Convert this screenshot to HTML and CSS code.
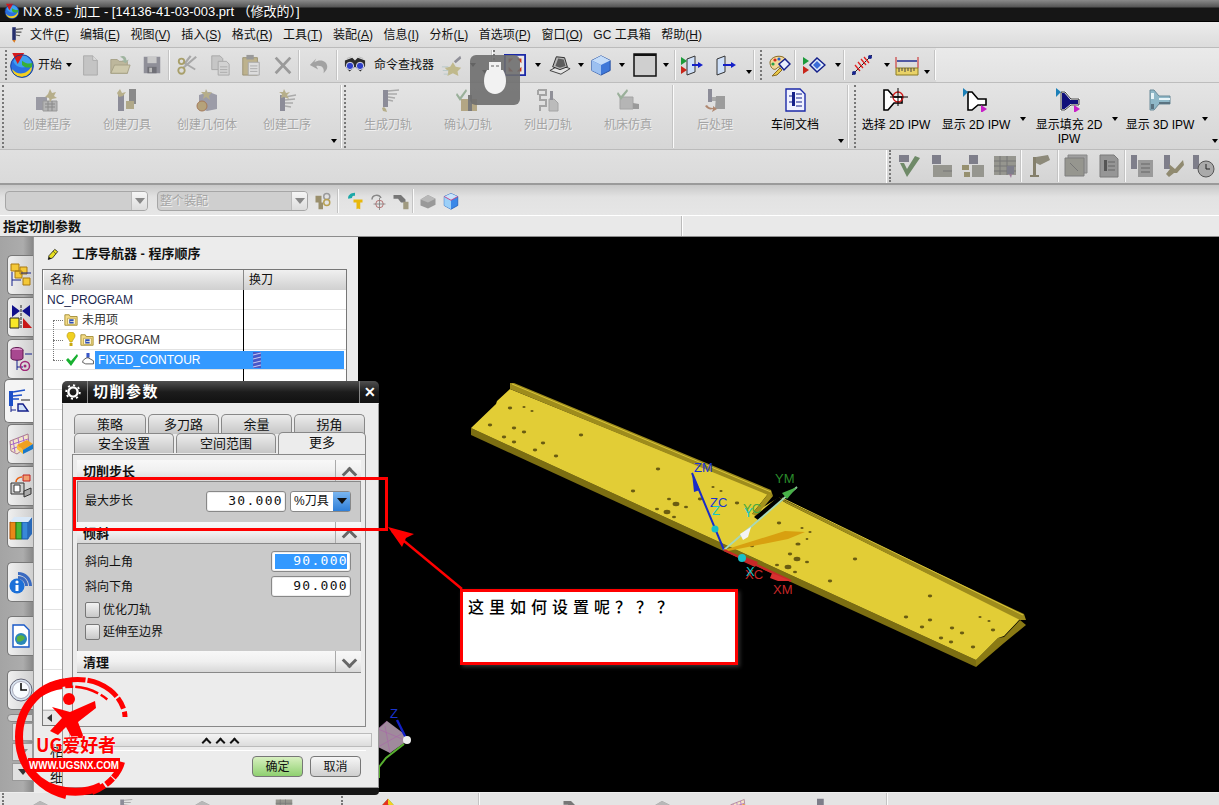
FILE: index.html
```html
<!DOCTYPE html>
<html lang="zh">
<head>
<meta charset="utf-8">
<title>NX 8.5</title>
<link rel="stylesheet" href="styles.css">
</head>
<body>
<svg class="defs" aria-hidden="true">
  <symbol id="i-nx" viewBox="0 0 24 24"><circle cx="12" cy="13" r="10.5" fill="#2a6fe0"/><path d="M3 16c5 6 14 5 18-3 1 5-4 10-9 10S3 20 3 16z" fill="#f4d020"/><path d="M4 9c3 6 10 7 17 2-1-5-5-8-9-8-4 0-7 3-8 6z" fill="#3fa0f0"/><path d="M12 8c4 3 7 3 10 2l-1 4c-4 1-7 0-9-2z" fill="#38b038"/><path d="M3 1h11L8 11z" fill="#d81818"/><circle cx="12" cy="13" r="10.5" fill="none" stroke="#143a90" stroke-width=".8"/></symbol>
  <symbol id="i-menu" viewBox="0 0 24 24"><path d="M6 1h5v18H6z" fill="#26306e"/><path d="M11 4l10-1M11 8l8 0M11 12l6 1" stroke="#555" stroke-width="1.6"/><path d="M6 19l3 4 2-4z" fill="#d87a20"/></symbol>
  <symbol id="i-rain" viewBox="0 0 24 24"><path d="M12 1l11 12-11 10L1 13z" fill="#38b838"/><path d="M12 1L1 13l6 5 5-9z" fill="#e83020"/><path d="M12 1l11 12-6 1-5-6z" fill="#f4d020"/><path d="M9 11h6v6H9z" fill="#fff" stroke="#4030a0"/></symbol>
  <symbol id="i-doc" viewBox="0 0 24 24"><path d="M5 2h10l5 5v16H5z" fill="#c4c4c4" stroke="#aaa"/><path d="M15 2v5h5" fill="#ddd" stroke="#aaa"/></symbol>
  <symbol id="i-folder" viewBox="0 0 24 24"><path d="M2 21V6h7l2 2h9v13z" fill="#bdb79c" stroke="#a5a085"/><path d="M2 21l4-9h17l-3 9z" fill="#cdc8ab" stroke="#a5a085"/><path d="M12 3c4-2 7 0 7 4l3-1-4 4-4-3h2c0-2-2-3-4-4z" fill="#9fb49f"/></symbol>
  <symbol id="i-save" viewBox="0 0 24 24"><path d="M3 3h18v18H3z" fill="#8f8f98"/><path d="M7 3h10v7H7z" fill="#c9c9c9"/><path d="M7 14h10v7H7z" fill="#6f6f76"/><path d="M9 15h3v5H9z" fill="#bbb"/></symbol>
  <symbol id="i-cut" viewBox="0 0 24 24"><path d="M22 3L8 15M16 2L9 11" stroke="#a8a8a8" stroke-width="2.5" fill="none"/><path d="M21 17L8 9" stroke="#a8a8a8" stroke-width="2" fill="none"/><circle cx="6" cy="18" r="3.5" fill="none" stroke="#a89f6a" stroke-width="2"/><circle cx="6" cy="8" r="3" fill="none" stroke="#a89f6a" stroke-width="2"/></symbol>
  <symbol id="i-copy" viewBox="0 0 24 24"><path d="M3 2h9l3 3v12H3z" fill="#c6c6c6" stroke="#a6a6a6"/><path d="M10 8h9l3 3v12H10z" fill="#d2d2d2" stroke="#a6a6a6"/><path d="M12 14h8M12 17h8M12 20h8" stroke="#aaa"/></symbol>
  <symbol id="i-paste" viewBox="0 0 24 24"><path d="M3 4h16v19H3z" fill="#bdb28d" stroke="#9a9273"/><path d="M7 1h8v5H7z" fill="#999"/><path d="M9 9h12v14H9z" fill="#ddd" stroke="#a6a6a6"/><path d="M11 13h8M11 16h8M11 19h8" stroke="#aaa"/></symbol>
  <symbol id="i-x" viewBox="0 0 24 24"><path d="M4 4l16 17M20 4L4 21" stroke="#9a9a9a" stroke-width="3" fill="none"/></symbol>
  <symbol id="i-undo" viewBox="0 0 24 24"><path d="M7 9c6-4 14-2 14 5 0 3-2 5-4 7 1-5-1-9-8-8l2 4-9-5 7-7z" fill="#a2a2a2"/></symbol>
  <symbol id="i-binoc" viewBox="0 0 24 24"><path d="M1 7l8-3 3 3 3-3 8 3v6l-5 6-6-5-6 5-5-6z" fill="#2c2c2c"/><path d="M3 5l5-2M16 3l5 2" stroke="#bbb"/><circle cx="6.5" cy="13" r="4" fill="#2f40c8" stroke="#eee"/><circle cx="17.5" cy="13" r="4" fill="#2f40c8" stroke="#eee"/></symbol>
  <symbol id="i-star" viewBox="0 0 24 24"><path d="M13 9l3 5 6 1-4 4 1 5-6-3-6 3 1-5-4-4 6-1z" fill="#c0b98c"/><path d="M14 8l7-6 1 3-6 5z" fill="#8f8f98"/><path d="M1 14h7M2 18h6M3 22h5" stroke="#b8c8c8"/></symbol>
  <symbol id="i-fit" viewBox="0 0 24 24"><path d="M1 1h22v22H1z" fill="#e8e8e8" stroke="#1c2aa8" stroke-width="2"/><path d="M5 5h5L5 10zM19 5h-5l5 5zM5 19h5l-5-5zM19 19h-5l5-5z" fill="#c6391c"/></symbol>
  <symbol id="i-shade" viewBox="0 0 24 24"><path d="M1 18l11-6 11 4-10 6z" fill="#e4e4e4" stroke="#333"/><path d="M4 14L8 3l9 1 3 10-8 3z" fill="#b4b4b4" stroke="#222"/><path d="M7 13l3-8 6 1 2 7-6 2z" fill="#5c5c5c"/></symbol>
  <symbol id="i-cube" viewBox="0 0 24 24"><path d="M2 7l10-5 10 5v11l-10 5-10-5z" fill="#3f78d8" stroke="#1f4aa0"/><path d="M2 7l10 5 10-5-10-5z" fill="#c4dcf8"/><path d="M2 7l10 5v11L2 18z" fill="#9cc0f0"/></symbol>
  <symbol id="i-win" viewBox="0 0 24 24"><path d="M1 1h22v22H1z" fill="#cfcfcf" stroke="#111" stroke-width="1.5"/><path d="M1 1h22v2H1z" fill="#111"/></symbol>
  <symbol id="i-flow1" viewBox="0 0 24 24"><path d="M7 6l8-3v16l-8 3z" fill="#cfe0f8" stroke="#333"/><path d="M1 4v8l6-4z" fill="#1c9a3a"/><path d="M1 13v8l6-4z" fill="#c8261a"/><path d="M12 12h9" stroke="#1420c8" stroke-width="2"/><path d="M23 12l-5-3v6z" fill="#1420c8"/></symbol>
  <symbol id="i-flow2" viewBox="0 0 24 24"><path d="M3 6l8-3v16l-8 3z" fill="#cfe0f8" stroke="#333"/><path d="M9 12h10" stroke="#1420c8" stroke-width="2"/><path d="M22 12l-5-3v6z" fill="#1420c8"/></symbol>
  <symbol id="i-palette" viewBox="0 0 24 24"><path d="M3 9c1-5 8-7 13-5 4 2 4 6 2 8-3 3-6 1-8 3-2 3-7 1-7-6z" fill="#f2d79a" stroke="#8a6a22"/><circle cx="8" cy="7" r="1.6" fill="#d8261a"/><circle cx="12" cy="6" r="1.6" fill="#2a60c8"/><circle cx="6" cy="11" r="1.6" fill="#28a048"/><path d="M12 11l6-5 5 5-6 6z" fill="#e8eefc" stroke="#14208a" stroke-width="1.5"/><path d="M5 23l8-8 2 2-5 5z" fill="#e8c84a" stroke="#8a6a22"/></symbol>
  <symbol id="i-flow3" viewBox="0 0 24 24"><path d="M1 4v8l6-4z" fill="#1c9a3a"/><path d="M1 13v8l6-4z" fill="#c8261a"/><path d="M8 12l7-7 8 7-8 7z" fill="#e0ecfc" stroke="#14208a" stroke-width="1.5"/><path d="M11 12l4-4 4 4-4 4z" fill="#3b6cd8"/></symbol>
  <symbol id="i-hatch" viewBox="0 0 24 24"><path d="M2 22L22 2" stroke="#222"/><circle cx="4" cy="20" r="2" fill="#14208a"/><circle cx="20" cy="4" r="2" fill="#14208a"/><path d="M5 12l5 6M8 9l5 6M11 6l5 6M14 4l5 6" stroke="#e02020" stroke-width="1.3"/></symbol>
  <symbol id="i-ruler" viewBox="0 0 24 24"><path d="M1 4v11M23 4v11" stroke="#c82020"/><path d="M2 8h20" stroke="#14208a" stroke-width="1.4"/><path d="M1 15h22v7H1z" fill="#e9d267" stroke="#8a7a22"/><path d="M4 15v4M7 15v3M10 15v4M13 15v3M16 15v4M19 15v3" stroke="#444"/></symbol>
  <symbol id="i-cprog" viewBox="0 0 24 24"><path d="M1 9h11v13H1z" fill="#9a9aa4"/><path d="M8 13h14v10H8z" fill="#b4b4b4" stroke="#999"/><path d="M10 16h10M10 19h10M13 13v10M17 13v10" stroke="#8a8a8a"/><path d="M15 1l2 4 4-1-2 4 3 2-5 1-2 3-1-4-4-1 3-3z" fill="#b6ae8a"/></symbol>
  <symbol id="i-ctool" viewBox="0 0 24 24"><path d="M3 6h6v17H3z" fill="#8c8c98"/><path d="M14 1h7v15h-7z" fill="#8a8a8a"/><path d="M11 13h8v8h-8z" fill="#b0a888"/><path d="M5 1l2 4 4-1-3 4-4 1-2-4z" fill="#b6ae8a"/></symbol>
  <symbol id="i-cgeom" viewBox="0 0 24 24"><path d="M4 7l10-3 8 3v14l-10 2-8-3z" fill="#9c9ca8"/><circle cx="7" cy="18" r="5" fill="#b5a27a" stroke="#a57a5a"/><path d="M11 1l2 4 4-1-3 4 1 4-4-3-3 2 1-4-3-3h4z" fill="#b6ae8a"/></symbol>
  <symbol id="i-coper" viewBox="0 0 24 24"><path d="M5 7h5v16H5z" fill="#8c8c98"/><path d="M10 9l11-2M10 12l10-1M10 15l8 0M10 18l6 1" stroke="#aaa" stroke-width="1.4"/><path d="M9 1l2 4 4-1-3 3 2 4-5-2-3 1 1-4-3-2h4z" fill="#b6ae8a"/></symbol>
  <symbol id="i-gen" viewBox="0 0 24 24"><path d="M7 2h5v17H7z" fill="#8c8c98"/><path d="M12 3l11-1M12 6l9 0M12 9l7 1M12 12l5 1" stroke="#aaa" stroke-width="1.4"/><path d="M8 19l2 2 1 3-4-1-1-3z" fill="#b6ae8a"/></symbol>
  <symbol id="i-verify" viewBox="0 0 24 24"><path d="M5 11h16v12H5z" fill="#b3a684"/><path d="M12 7h4v16h-4z" fill="#7a7a7a"/><path d="M1 5l3 4 6-8 1 2-7 10-4-6z" fill="#9ab09a"/></symbol>
  <symbol id="i-list" viewBox="0 0 24 24"><path d="M2 2h8v5H4v5h6v6H4v5M2 2v5" fill="none" stroke="#a4a4a4" stroke-width="2"/><path d="M13 11h5l4 4v8h-9z" fill="#bbb" stroke="#a4a4a4"/><path d="M14 3h3v9h-3z" fill="#909098"/></symbol>
  <symbol id="i-sim" viewBox="0 0 24 24"><path d="M4 9h13v12H4z" fill="#b5b5b5" stroke="#a4a4a4"/><path d="M17 15l6 1v5h-6z" fill="#9a9a9a"/><path d="M2 4l3 4 6-7 1 2-7 9-4-6z" fill="#9ab09a"/></symbol>
  <symbol id="i-post" viewBox="0 0 24 24"><path d="M5 1h4v13H5z" fill="#8c8c98"/><path d="M9 9h5v4H9z" fill="#aaa"/><path d="M13 8h9v13H12z" fill="#9c9c9c"/><path d="M2 18c2 3 5 4 8 3l-1 3 5-3-4-3v2c-3 0-5-1-6-3z" fill="#b08870"/></symbol>
  <symbol id="i-shop" viewBox="0 0 24 24"><path d="M3 1h14l5 5v17H3z" fill="#f0f2ff" stroke="#1c2aa8" stroke-width="1.4"/><path d="M9 4h3v14H9z" fill="#14208a"/><path d="M13 6h6M13 10h6M13 14h6M13 18h6M6 8h3M6 14h3" stroke="#14208a"/></symbol>
  <symbol id="i-sel2d" viewBox="0 0 28 24"><path d="M2 2h4l6 7h8v6h-8l-6 7H2z" fill="#fff" stroke="#000" stroke-width="1.6"/><circle cx="16" cy="9" r="5" fill="none" stroke="#d01818" stroke-width="1.3"/><path d="M16 0v18M8 9h18" stroke="#000"/></symbol>
  <symbol id="i-show2d" viewBox="0 0 28 24"><path d="M6 4h4l6 7h8v6h-8l-6 5H6z" fill="#fff" stroke="#000" stroke-width="1.6"/><path d="M1 0l5 4-5 5z" fill="#1c80b8"/><path d="M19 17l6 4-6 4z" fill="#c820c8"/></symbol>
  <symbol id="i-fill2d" viewBox="0 0 28 24"><path d="M6 4h4l6 7h8v6h-8l-6 5H6z" fill="#10107a" stroke="#fff" stroke-width="2"/><path d="M6 4h4l6 7h8v6h-8l-6 5H6z" fill="none" stroke="#000" stroke-width=".8"/><path d="M1 0l5 4-5 5z" fill="#1c80b8"/><path d="M19 17l6 4-6 4z" fill="#c820c8"/></symbol>
  <symbol id="i-show3d" viewBox="0 0 28 24"><path d="M4 2h4l5 6h11v8H13l-5 6H4z" fill="#8fb8c8" stroke="#6a8a98"/><path d="M13 10h11v2H13zM5 5h3v6H5z" fill="#e8f4f8"/><path d="M5 16h3v5H5zM13 14h11v2H13z" fill="#5a7280"/></symbol>
  <symbol id="i-r1" viewBox="0 0 24 24"><path d="M2 1h10v7H2z" fill="#7e7e8a"/><path d="M3 9l7 14 13-19-5-2-8 13-3-6z" fill="#6f8a68"/></symbol>
  <symbol id="i-r2" viewBox="0 0 24 24"><path d="M3 1h9v9H3z" fill="#7e7e8a"/><path d="M4 11h19v12H4z" fill="#96968f"/><path d="M14 17h9" stroke="#777"/></symbol>
  <symbol id="i-r3" viewBox="0 0 24 24"><path d="M8 1h9v9H8z" fill="#7e7e8a"/><path d="M11 11h12v12H11z" fill="#96968f"/><path d="M1 11h7v5H1zM3 18h6v5H3z" fill="#96906f"/></symbol>
  <symbol id="i-r4" viewBox="0 0 24 24"><path d="M1 2h22v19H1z" fill="#96968f"/><path d="M1 7h22M1 12h22M1 17h22M7 2v19M14 2v19" stroke="#777"/><path d="M14 12h7v8h-7z" fill="#7e7e8a"/><path d="M16 20h3l-1 4z" fill="#9a7a98"/></symbol>
  <symbol id="i-r5" viewBox="0 0 24 24"><path d="M5 3h3v19H5zM2 21h9v2H2z" fill="#85806c"/><path d="M8 3l12-2 2 5-10 5-4-2z" fill="#8d8a7a"/></symbol>
  <symbol id="i-r6" viewBox="0 0 24 24"><path d="M4 1h19v18H4z" fill="#a0a0a0" stroke="#888"/><path d="M1 4h19v18H1z" fill="#96968f" stroke="#7f7f7f"/><path d="M6 9l8 8" stroke="#777"/></symbol>
  <symbol id="i-r7" viewBox="0 0 24 24"><path d="M3 1h14l4 4v18H3z" fill="#969696" stroke="#7a7a7a"/><path d="M7 6h3v11H7z" fill="#555"/><path d="M11 8h7M11 12h7M11 16h7" stroke="#666"/></symbol>
  <symbol id="i-r8" viewBox="0 0 24 24"><path d="M1 1h6v14H1z" fill="#7e7e8a"/><path d="M8 6h15v17H8z" fill="#9a9a9a"/><path d="M11 10h9M11 14h9M11 18h9" stroke="#666"/></symbol>
  <symbol id="i-r9" viewBox="0 0 24 24"><path d="M3 1h6v14H3z" fill="#7e7e8a"/><path d="M8 10l6 5 8-9 1 5-7 8-3 0-5 4-3-3 4-5z" fill="#908a70"/></symbol>
  <symbol id="i-r10" viewBox="0 0 24 24"><path d="M2 1h6v14H2z" fill="#7e7e8a"/><circle cx="15" cy="15" r="8" fill="#aaa" stroke="#555"/><path d="M15 10v5h4" stroke="#222" fill="none"/></symbol>
  <symbol id="i-asm" viewBox="0 0 24 24"><path d="M2 5h8v9H2zM6 14h6v9H6z" fill="#9a8f6c"/><circle cx="17" cy="6" r="4" fill="none" stroke="#9a9a9a" stroke-width="2"/><circle cx="17" cy="14" r="4" fill="none" stroke="#b8a050" stroke-width="2"/></symbol>
  <symbol id="i-s1" viewBox="0 0 24 24"><path d="M12 1c-6 0-10 4-9 8l5-1c0-3 2-3 4-3z" fill="#1ca8a8"/><path d="M10 10h12v4h-3v9l-3-1-2 1v-9h-4z" fill="#e8b80c"/></symbol>
  <symbol id="i-s2" viewBox="0 0 24 24"><path d="M4 10c0-6 9-8 12-2" fill="none" stroke="#888" stroke-width="2"/><circle cx="14" cy="16" r="5" fill="none" stroke="#a85050"/><path d="M14 8v16M6 16h16" stroke="#777"/></symbol>
  <symbol id="i-s3" viewBox="0 0 24 24"><path d="M2 4h10l6 6v4H12L8 9H2z" fill="#777"/><path d="M15 13h7v10h-7z" fill="#a09a80"/></symbol>
  <symbol id="i-s4" viewBox="0 0 24 24"><path d="M2 10l10-6 10 5v8l-10 5-10-4z" fill="#999"/><path d="M2 10l10 4 10-5-10-5z" fill="#b8b8b8"/></symbol>
  <symbol id="i-s5" viewBox="0 0 24 24"><path d="M3 6l9-4 9 4v12l-9 5-9-5z" fill="#3b88e8" stroke="#1c5ab8"/><path d="M3 6l9 5 9-5-9-4z" fill="#c8e4fc"/><path d="M3 6l9 5v12l-9-5z" fill="#9cd0f8"/><path d="M3 6l9 5 9-5" fill="none" stroke="#e02868"/></symbol>
  <symbol id="i-t1" viewBox="0 0 24 24"><path d="M2 1h8v7H2zM11 4h7v7h-7zM6 8h7v7H6z" fill="#f4c838" stroke="#a87810"/><path d="M3 9v14M3 17h9M3 23h0M12 10h10" stroke="#14208a" fill="none"/><path d="M14 15h7v7h-7z" fill="#f4c838" stroke="#a87810"/></symbol>
  <symbol id="i-t2" viewBox="0 0 24 24"><path d="M3 0l8 6-8 6zM21 0l-8 6 8 6z" fill="#10108a"/><path d="M12 0v24" stroke="#222" stroke-dasharray="3 1"/><path d="M1 13h9v10H1z" fill="#f8e828" stroke="#222"/><path d="M14 13l9 10h-9z" fill="#c81818"/></symbol>
  <symbol id="i-t3" viewBox="0 0 24 24"><ellipse cx="8" cy="3" rx="6" ry="2.5" fill="#d890c8" stroke="#601850"/><path d="M2 3v8c0 3 12 3 12 0V3" fill="#a84890" stroke="#601850"/><path d="M8 13v10M8 20h6M16 7h7" stroke="#14208a"/><circle cx="16" cy="19" r="4.5" fill="none" stroke="#a02878" stroke-width="1.5"/><circle cx="16" cy="19" r="1.5" fill="#a02878"/></symbol>
  <symbol id="i-t4" viewBox="0 0 24 24"><path d="M2 2h4v15H2z" fill="#1c50c8"/><path d="M6 3l12-2M6 7l9-1M6 10l6 0" stroke="#1c50c8" stroke-width="1.5"/><path d="M14 11h9" stroke="#222"/><path d="M4 17v6M4 21h5" stroke="#14208a"/><path d="M11 15v7h10l-5-7z" fill="#cfe0f8" stroke="#14208a" stroke-width="1.4"/></symbol>
  <symbol id="i-t5" viewBox="0 0 24 24"><path d="M1 9l18-7 1 11-12 9-6-3z" fill="#f5e6c8" stroke="#a87890"/><path d="M4 8l2 12M9 6l2 12M14 4l2 11M1 13l18-6M3 17l15-6" stroke="#a868c8" fill="none"/><path d="M8 13l10-5 6 4-10 6z" fill="#f0a020"/><path d="M8 13l6 5v4l-6-5z" fill="#f8c040"/><path d="M14 18l10-6v5l-10 5z" fill="#1878c8"/></symbol>
  <symbol id="i-t6" viewBox="0 0 24 24"><path d="M2 9h13v11H2z" fill="#d0d0d0" stroke="#333"/><path d="M5 11h6v7H5z" fill="#fff" stroke="#333"/><path d="M15 17l7-3v6l-7 3z" fill="#aaa" stroke="#333"/><path d="M7 8c0-3 3-5 6-5" stroke="#e86010" fill="none" stroke-width="1.6"/><path d="M14 1h7v6h-7z" fill="#f0a070" stroke="#c02020"/></symbol>
  <symbol id="i-t7" viewBox="0 0 24 24"><path d="M1 6h6v17H1z" fill="#e88818" stroke="#a85008"/><path d="M7 6h6v17H7z" fill="#48b838" stroke="#207810"/><path d="M13 6h6v17h-6z" fill="#3888d8" stroke="#1858a8"/><path d="M19 6l4-5v17l-4 5z" fill="#2868b8"/><path d="M1 6l4-5h18l-4 5z" fill="#d8e8f8"/></symbol>
  <symbol id="i-t8" viewBox="0 0 24 24"><circle cx="8" cy="16" r="7.5" fill="#1c70d8"/><circle cx="8" cy="12" r="1.6" fill="#fff"/><path d="M6.5 15h3v6h-3z" fill="#fff"/><path d="M9 5c6 0 11 5 11 11h3C23 8 17 2 9 2zM9 9c4 0 7 3 7 7h3c0-6-4-10-10-10z" fill="#3a6ac0"/></symbol>
  <symbol id="i-t9" viewBox="0 0 24 24"><path d="M4 1h11l5 5v17H4z" fill="#fff" stroke="#1858c8" stroke-width="1.4"/><circle cx="12" cy="15" r="6" fill="#2a88b8"/><path d="M8 13c3-3 7-2 8 1-2 3-6 5-8 3z" fill="#58b040"/></symbol>
  <symbol id="i-t10" viewBox="0 0 24 24"><circle cx="12" cy="12" r="11" fill="#d8e4f0" stroke="#667"/><circle cx="12" cy="12" r="8.5" fill="#f8fcff" stroke="#aab"/><path d="M12 5v7h6" stroke="#111" stroke-width="1.6" fill="none"/></symbol>
  <symbol id="i-pen" viewBox="0 0 24 24"><path d="M5 15L15 4l5 4-9 11-7 2z" fill="#e8e020" stroke="#222" stroke-width="1.4"/><path d="M12 7l5 5" stroke="#222"/><path d="M3 22l3-5 3 3z" fill="#111"/></symbol>
  <symbol id="i-fo" viewBox="0 0 16 16"><path d="M1 14V2h5l1 2h8v10z" fill="#f4dc88" stroke="#a08a30"/><path d="M4 6h9v7H4z" fill="#fff8d8" stroke="#c0a850"/><path d="M6 7h5v2H7v1h4v2H6z" fill="#3050b8"/></symbol>
  <symbol id="i-bulb" viewBox="0 0 10 16"><path d="M5 0c3 0 4 2 4 4 0 2-2 3-3 6H4C3 7 1 6 1 4c0-2 1-4 4-4z" fill="#f0d020" stroke="#b09010" stroke-width=".6"/><path d="M3.5 11h3v3h-3z" fill="#c8a810"/></symbol>
  <symbol id="i-check" viewBox="0 0 14 14"><path d="M1 7l2-2 3 3 6-7 1 2-7 10z" fill="#18b030"/></symbol>
  <symbol id="i-mill" viewBox="0 0 16 18"><path d="M6 0h4v6H6z" fill="#3858c8"/><path d="M1 12c0-3 4-6 7-6l7 4v4H5z" fill="#fff" stroke="#333"/></symbol>
  <symbol id="i-holder" viewBox="0 0 10 16"><path d="M1 0h8v16H1z" fill="#4858c8"/><path d="M1 3l8-2M1 7l8-2M1 11l8-2M1 15l8-2" stroke="#c8c8f0"/></symbol>
  <symbol id="i-gear" viewBox="0 0 16 16"><circle cx="8" cy="8" r="4.6" fill="none" stroke="#fff" stroke-width="2.4"/><circle cx="8" cy="8" r="6.8" fill="none" stroke="#fff" stroke-width="1.8" stroke-dasharray="2.2 3.1"/></symbol>
</svg>

<div class="app">
  <header class="title"><svg class="title-ico"><use href="#i-nx"/></svg><span>NX 8.5 - 加工 - [14136-41-03-003.prt （修改的）]</span></header>
  <nav class="menu">
    <svg class="menu-ico"><use href="#i-menu"/></svg>
    <span>文件(<u>F</u>)</span><span>编辑(<u>E</u>)</span><span>视图(<u>V</u>)</span><span>插入(<u>S</u>)</span><span>格式(<u>R</u>)</span><span>工具(<u>T</u>)</span><span>装配(<u>A</u>)</span><span>信息(<u>I</u>)</span><span>分析(<u>L</u>)</span><span>首选项(<u>P</u>)</span><span>窗口(<u>O</u>)</span><span>GC 工具箱</span><span>帮助(<u>H</u>)</span>
  </nav>

  <div class="bar">
    <i class="grip g8"></i>
    <b class="c w28"><svg class="ic26"><use href="#i-nx"/></svg></b>
    <b class="c w28 txt">开始</b><b class="c w10"><i class="drop"></i></b>
    <b class="c w32"><svg class="ic22"><use href="#i-doc"/></svg></b>
    <b class="c w28"><svg class="ic22"><use href="#i-folder"/></svg></b>
    <b class="c w35"><svg class="ic22"><use href="#i-save"/></svg></b><i class="sep"></i>
    <b class="c w34"><svg class="ic22"><use href="#i-cut"/></svg></b>
    <b class="c w32"><svg class="ic22"><use href="#i-copy"/></svg></b>
    <b class="c w30"><svg class="ic22"><use href="#i-paste"/></svg></b>
    <b class="c w33"><svg class="ic22"><use href="#i-x"/></svg></b><i class="sep"></i>
    <b class="c w37"><svg class="ic22"><use href="#i-undo"/></svg></b><i class="sep"></i>
    <b class="c w34"><svg class="ic22"><use href="#i-binoc"/></svg></b>
    <b class="c w64 txt">命令查找器</b>
    <b class="c w32"><svg class="ic22"><use href="#i-star"/></svg></b>
    <b class="c w10"><i class="drop"></i></b>
    <b class="c w14 low"><i class="drop"></i></b><i class="sep"></i>
    <i class="grip g10"></i>
    <b class="c w24"><svg class="ic22"><use href="#i-fit"/></svg></b>
    <b class="c w22"><i class="drop"></i></b>
    <b class="c w22"><svg class="ic22"><use href="#i-shade"/></svg></b>
    <b class="c w20"><i class="drop"></i></b>
    <b class="c w20"><svg class="ic22"><use href="#i-cube"/></svg></b>
    <b class="c w22"><i class="drop"></i></b>
    <b class="c w24"><svg class="ic24"><use href="#i-win"/></svg></b>
    <b class="c w18"><i class="drop"></i></b><i class="sep"></i>
    <b class="c w32"><svg class="ic24"><use href="#i-flow1"/></svg></b>
    <b class="c w36"><svg class="ic24"><use href="#i-flow2"/></svg></b>
    <b class="c w10 low"><i class="drop"></i></b><i class="sep"></i>
    <i class="grip g8"></i>
    <b class="c w32"><svg class="ic24"><use href="#i-palette"/></svg></b><i class="sep"></i>
    <b class="c w36"><svg class="ic24"><use href="#i-flow3"/></svg></b>
    <b class="c w12"><i class="drop"></i></b><i class="sep"></i>
    <b class="c w34"><svg class="ic24"><use href="#i-hatch"/></svg></b>
    <b class="c w16"><i class="drop"></i></b>
    <b class="c w24"><svg class="ic24"><use href="#i-ruler"/></svg></b>
    <b class="c w16 low"><i class="drop"></i></b><i class="sep"></i>
    <span class="bar-rest"></span>
  </div>

  <div class="ribbon">
    <i class="grip g7"></i>
    <div class="tool off"><svg class="ic24"><use href="#i-cprog"/></svg><span>创建程序</span></div>
    <div class="tool off"><svg class="ic24"><use href="#i-ctool"/></svg><span>创建刀具</span></div>
    <div class="tool off"><svg class="ic24"><use href="#i-cgeom"/></svg><span>创建几何体</span></div>
    <div class="tool off"><svg class="ic24"><use href="#i-coper"/></svg><span>创建工序</span></div>
    <b class="c w14 foot"><i class="drop"></i></b><i class="sep"></i>
    <i class="grip g5"></i>
    <div class="tool off"><svg class="ic24"><use href="#i-gen"/></svg><span>生成刀轨</span></div>
    <div class="tool off"><svg class="ic24"><use href="#i-verify"/></svg><span>确认刀轨</span></div>
    <div class="tool off"><svg class="ic24"><use href="#i-list"/></svg><span>列出刀轨</span></div>
    <div class="tool off"><svg class="ic24"><use href="#i-sim"/></svg><span>机床仿真</span></div>
    <i class="sep sep-pad"></i>
    <div class="tool off w82"><svg class="ic24"><use href="#i-post"/></svg><span>后处理</span></div>
    <div class="tool w78"><svg class="ic24"><use href="#i-shop"/></svg><span>车间文档</span></div>
    <b class="c w14 foot"><i class="drop"></i></b><i class="sep"></i>
    <i class="grip g8"></i>
    <div class="tool w78"><svg class="ic28"><use href="#i-sel2d"/></svg><span>选择 2D IPW</span></div>
    <div class="tool w82"><svg class="ic28"><use href="#i-show2d"/></svg><span>显示 2D IPW</span></div>
    <b class="c w12 head"><i class="drop"></i></b>
    <div class="tool w80"><svg class="ic28"><use href="#i-fill2d"/></svg><span>显示填充 2D IPW</span></div>
    <b class="c w12 head"><i class="drop"></i></b>
    <div class="tool w78"><svg class="ic28"><use href="#i-show3d"/></svg><span>显示 3D IPW</span></div>
    <b class="c w12 head"><i class="drop"></i></b>
    <b class="c w7 foot"><i class="drop"></i></b>
  </div>

  <div class="row3">
    <div class="rbar">
      <i class="grip g5"></i>
      <b class="c w32"><svg class="ic24"><use href="#i-r1"/></svg></b>
      <b class="c w32"><svg class="ic24"><use href="#i-r2"/></svg></b>
      <b class="c w32"><svg class="ic24"><use href="#i-r3"/></svg></b>
      <b class="c w32"><svg class="ic24"><use href="#i-r4"/></svg></b><i class="sep"></i>
      <b class="c w36"><svg class="ic24"><use href="#i-r5"/></svg></b><i class="sep"></i>
      <b class="c w33"><svg class="ic24"><use href="#i-r6"/></svg></b>
      <b class="c w33"><svg class="ic24"><use href="#i-r7"/></svg></b><i class="sep"></i>
      <b class="c w32"><svg class="ic24"><use href="#i-r8"/></svg></b>
      <b class="c w30"><svg class="ic24"><use href="#i-r9"/></svg></b>
      <b class="c w30"><svg class="ic24"><use href="#i-r10"/></svg></b>
    </div>
  </div>

  <div class="selbar">
    <div class="combo wa"><span></span><i class="combo-btn"><i class="tri"></i></i></div>
    <div class="combo wb"><span>整个装配</span><i class="combo-btn"><i class="tri"></i></i></div>
    <b class="c w30"><svg class="ic18"><use href="#i-asm"/></svg></b><i class="sep"></i>
    <b class="c w24 ml4"><svg class="ic18"><use href="#i-s1"/></svg></b>
    <b class="c w22"><svg class="ic18"><use href="#i-s2"/></svg></b>
    <b class="c w24"><svg class="ic18"><use href="#i-s3"/></svg></b><i class="sep"></i>
    <b class="c w24 ml2"><svg class="ic18"><use href="#i-s4"/></svg></b>
    <b class="c w22"><svg class="ic18"><use href="#i-s5"/></svg></b>
  </div>

  <div class="status"><strong>指定切削参数</strong><i class="status-sep"></i></div>

  <main class="main">
    <aside class="tabs">
      <div class="vt t1"><svg class="ic24"><use href="#i-t1"/></svg></div>
      <div class="vt t1"><svg class="ic24"><use href="#i-t2"/></svg></div>
      <div class="vt t1"><svg class="ic24"><use href="#i-t3"/></svg></div>
      <div class="vt act"><svg class="ic24"><use href="#i-t4"/></svg></div>
      <div class="vt t1"><svg class="ic24"><use href="#i-t5"/></svg></div>
      <div class="vt t1"><svg class="ic24"><use href="#i-t6"/></svg></div>
      <div class="vt t1"><svg class="ic24"><use href="#i-t7"/></svg></div>
      <div class="vt t1 gap12"><svg class="ic24"><use href="#i-t8"/></svg></div>
      <div class="vt t1 gap14"><svg class="ic24"><use href="#i-t9"/></svg></div>
      <div class="vt t1 gap14"><svg class="ic24"><use href="#i-t10"/></svg></div>
      <div class="handle"></div>
      <div class="sq gap14"></div>
      <div class="sq"><i class="tri"></i></div>
      <div class="sq"><i class="tri bar-tri"></i></div>
    </aside>
    <section class="nav">
      <div class="nav-head"><svg class="ic14"><use href="#i-pen"/></svg><strong>工序导航器 - 程序顺序</strong></div>
      <div class="table">
        <div class="thead"><span class="col1">名称</span><span class="col2">换刀</span></div>
        <div class="tbody">
          <div class="tr"><span class="name n0">NC_PROGRAM</span></div>
          <div class="tr"><i class="dots d1"></i><svg class="ic14"><use href="#i-fo"/></svg><span class="name n1">未用项</span></div>
          <div class="tr"><i class="dots d2"></i><svg class="bulb"><use href="#i-bulb"/></svg><svg class="ic14"><use href="#i-fo"/></svg><span class="name n1">PROGRAM</span></div>
          <div class="tr"><i class="dots d3"></i><svg class="chk"><use href="#i-check"/></svg><svg class="ic14"><use href="#i-mill"/></svg><span class="name sel">FIXED_CONTOUR<svg class="holder"><use href="#i-holder"/></svg></span></div>
        </div>
        <div class="tfoot"><i class="tri left"></i></div>
      </div>
      <div class="nav-foot"><strong>相关性</strong><strong>细节</strong></div>
    </section>
    <div class="view"></div>
  </main>
  <footer class="bottom">
    <i class="grip g7 grip-b"></i>
    <b class="c w66"><svg class="ic18"><use href="#i-s4"/></svg></b>
    <b class="c w102"><svg class="ic18"><use href="#i-gen"/></svg></b>
    <b class="c w54"><svg class="ic18"><use href="#i-s4"/></svg></b>
    <b class="c w110"><svg class="ic18"><use href="#i-r4"/></svg></b>
    <i class="grip g5 grip-b"></i>
    <b class="c w86"><svg class="ic18"><use href="#i-rain"/></svg></b>
    <b class="c w48"></b><i class="sep"></i>
    <b class="c w92 mla"><svg class="ic18"><use href="#i-s3"/></svg></b>
    <b class="c w90"><svg class="ic18"><use href="#i-s4"/></svg></b>
    <b class="c w64"><svg class="ic18"><use href="#i-t5"/></svg></b>
    <b class="c w98"><svg class="ic18"><use href="#i-r3"/></svg></b>
    <b class="c w18"></b><i class="sep"></i>
  </footer>
</div>

<svg class="scene" viewBox="0 0 1219 805">
  <path d="M471 428L976 660V667L471 435z" fill="#7c6e12"/>
  <path d="M976 660L998 638 1004 637 1020 620 1026 625 1004 643 976 667z" fill="#8a7a14"/>
  <path d="M471 428L496 404 497 401 510 389 768 494 752 514 778 498 786 503 1020 619 1004 636 998 638 976 660z" fill="#e2cd36"/>
  <path d="M510 383L514 383 771 490 773 496 768 495 510 389z" fill="#9e8c1c"/>
  <path d="M512 384L771 492" stroke="#d8c438" fill="none"/>
  <path d="M778 497L1024 614 1026 620 1020 620 786 503z" fill="#9e8c1c"/>
  <path d="M782 498L1023 615" stroke="#d8c438" fill="none"/>
  <path d="M768 494L773 496 756 516 752 514z" fill="#a5921c"/>
  <path d="M754 517L778 497 783 500 758 520z" fill="#000"/>
  <g class="holes">
    <ellipse cx="510" cy="408" rx="2.2" ry="1.4"/><ellipse cx="524" cy="407" rx="1.6" ry="1"/><ellipse cx="532" cy="411" rx="1.6" ry="1"/><ellipse cx="490" cy="425" rx="2.2" ry="1.4"/><ellipse cx="514" cy="428" rx="2.2" ry="1.4"/><ellipse cx="524" cy="432" rx="2.2" ry="1.4"/><ellipse cx="504" cy="437" rx="2.2" ry="1.4"/><ellipse cx="514" cy="442" rx="2.2" ry="1.4"/><ellipse cx="543" cy="443" rx="2.2" ry="1.4"/><ellipse cx="535" cy="450" rx="2.2" ry="1.4"/><ellipse cx="556" cy="456" rx="2.2" ry="1.4"/><ellipse cx="581" cy="435" rx="2.2" ry="1.4"/><ellipse cx="658" cy="469" rx="2.2" ry="1.4"/><ellipse cx="633" cy="491" rx="2.2" ry="1.4"/><ellipse cx="669" cy="499" rx="2" ry="1.2"/><ellipse cx="676" cy="504" rx="3.4" ry="2.2"/><ellipse cx="686" cy="507" rx="2" ry="1.2"/><ellipse cx="657" cy="509" rx="2" ry="1.2"/><ellipse cx="667" cy="512" rx="3.4" ry="2.2"/><ellipse cx="674" cy="517" rx="2" ry="1.2"/><ellipse cx="713" cy="487" rx="1.6" ry="1"/><ellipse cx="721" cy="491" rx="1.6" ry="1"/><ellipse cx="700" cy="499" rx="2.2" ry="1.4"/><ellipse cx="737" cy="503" rx="2.2" ry="1.4"/><ellipse cx="779" cy="523" rx="2.2" ry="1.4"/><ellipse cx="802" cy="528" rx="1.6" ry="1"/><ellipse cx="810" cy="532" rx="1.6" ry="1"/><ellipse cx="798" cy="544" rx="2.6" ry="1.6"/><ellipse cx="807" cy="539" rx="1.4" ry="1"/><ellipse cx="790" cy="554" rx="2.2" ry="1.4"/><ellipse cx="797" cy="559" rx="3.4" ry="2.2"/><ellipse cx="807" cy="562" rx="2" ry="1.2"/><ellipse cx="777" cy="565" rx="2" ry="1.2"/><ellipse cx="788" cy="567" rx="3.4" ry="2.2"/><ellipse cx="795" cy="572" rx="2" ry="1.2"/><ellipse cx="855" cy="559" rx="2.2" ry="1.4"/><ellipse cx="830" cy="581" rx="2.2" ry="1.4"/><ellipse cx="930" cy="596" rx="2.2" ry="1.4"/><ellipse cx="906" cy="617" rx="2.2" ry="1.4"/><ellipse cx="930" cy="620" rx="2.2" ry="1.4"/><ellipse cx="922" cy="627" rx="2.2" ry="1.4"/><ellipse cx="952" cy="628" rx="2.2" ry="1.4"/><ellipse cx="962" cy="633" rx="2.2" ry="1.4"/><ellipse cx="941" cy="638" rx="2.2" ry="1.4"/><ellipse cx="951" cy="642" rx="2.2" ry="1.4"/><ellipse cx="973" cy="647" rx="2.2" ry="1.4"/><ellipse cx="980" cy="617" rx="1.6" ry="1"/><ellipse cx="989" cy="621" rx="1.6" ry="1"/><ellipse cx="993" cy="630" rx="2.2" ry="1.4"/><ellipse cx="752" cy="546" rx="2" ry="1.2"/>
  </g>
  <path d="M724 550L692 473" stroke="#1a2cc8" stroke-width="2"/>
  <path d="M692 473L700 490 694 492z" fill="#1a2cc8"/>
  <path d="M724 550L797 487" stroke="#a8d8b8" stroke-width="1.8"/>
  <path d="M797 487L782 493 787 499z" fill="#48b048"/>
  <path d="M740 534L751 527 748 537 743 540z" fill="#f4f4f4"/>
  <path d="M724 550L785 531 805 532 788 539 728 551z" fill="#d8a010"/>
  <path d="M724 550L791 581" stroke="#c82828" stroke-width="2.4"/>
  <path d="M791 581L772 573 770 578 778 581z" fill="#d83030"/>
  <path d="M745 557L758 562 755 567 744 562z" fill="#c82828"/>
  <circle cx="715" cy="529" r="3.5" fill="#18c0c8"/>
  <circle cx="742" cy="558" r="4" fill="#18c0c8"/>
  <text class="ax blue" x="694" y="472">ZM</text>
  <text class="ax blue" x="710" y="507">ZC</text>
  <text class="ax cyan" x="712" y="515">Z</text>
  <text class="ax green" x="775" y="483">YM</text>
  <text class="ax green2" x="743" y="513">YC</text>
  <text class="ax cyan" x="744" y="517">Y</text>
  <text class="ax red" x="745" y="579">XC</text>
  <text class="ax cyan" x="746" y="576">X</text>
  <text class="ax red" x="773" y="594">XM</text>
  <path d="M387 721L403 733 407 741 390 753 378 747V729z" fill="#a08a9c"/>
  <path d="M387 721L378 729 407 741M378 747L403 733M390 753L385 726" stroke="#a868a8" fill="none" stroke-width=".7"/>
  <path d="M397 720L407 740" stroke="#1220c8" stroke-width="2.4"/>
  <path d="M404 744L386 758 379 767V778" stroke="#58b030" stroke-width="2" fill="none"/>
  <circle cx="407" cy="740" r="4" fill="#eee"/>
  <text class="ax blue" x="390" y="718">Z</text>
</svg>

<div class="mouse"><svg class="mouse-ic" viewBox="0 0 24 32"><path d="M6 0h12v8h2c2 3 3 7 3 11 0 8-5 13-11 13S1 27 1 19c0-4 1-8 3-11h2z" fill="#f2f2f2"/><path d="M8 3h3v2H8zM13 3h3v2h-3z" fill="#aaa"/></svg></div>

<section class="dlg">
  <div class="dlg-title"><svg class="ic16"><use href="#i-gear"/></svg><strong>切削参数</strong><span class="close">✕</span></div>
  <div class="dlg-body">
    <div class="dtabs">
      <span class="dtab w72">策略</span><span class="dtab w71">多刀路</span><span class="dtab w71">余量</span><span class="dtab w71">拐角</span>
    </div>
    <div class="dtabs r2">
      <span class="dtab w100">安全设置</span><span class="dtab w100">空间范围</span><span class="dtab active">更多</span>
    </div>
    <div class="panel">
      <div class="shead">切削步长<i class="chev up"></i></div>
      <div class="sbody s1">
        <span class="lab">最大步长</span>
        <span class="inp i80">30.000</span>
        <span class="sel2">%刀具<i class="sel2-btn"><i class="tri"></i></i></span>
      </div>
      <div class="shead">倾斜<i class="chev up"></i></div>
      <div class="sbody s2">
        <div class="frow"><span class="lab">斜向上角</span><span class="inp i80 hl">90.000</span></div>
        <div class="frow"><span class="lab">斜向下角</span><span class="inp i80">90.000</span></div>
        <label class="ck"><i class="box"></i>优化刀轨</label>
        <label class="ck"><i class="box"></i>延伸至边界</label>
      </div>
      <div class="shead">清理<i class="chev down"></i></div>
    </div>
    <div class="expander"><i></i><i></i><i></i></div>
    <div class="btns"><span class="btn ok">确定</span><span class="btn">取消</span></div>
  </div>
  <div class="dlg-foot"></div>
</section>

<div class="redbox"></div>
<svg class="scene anno" viewBox="0 0 1219 805">
  <path d="M462 589L392 531" stroke="#f00" stroke-width="2.4"/>
  <path d="M388 527L414 534 406 538 402 547z" fill="#f00"/>
</svg>
<div class="callout">这里如何设置呢？？？</div>

<svg class="logo" viewBox="0 0 125 135">
  <g fill="none" stroke="#f00">
    <path d="M62 12C32 12 9 36 9 67c0 28 18 50 46 54 14 2 26 0 36-5" stroke-width="8"/>
    <path d="M28 24C46 8 78 3 100 20c9 7 15 18 15 27" stroke-width="5" stroke-dasharray="30 1 20 2 34 2 12 3"/>
    <path d="M22 32C42 14 74 10 98 30" stroke-width="2.5" stroke-dasharray="8 2 24 3"/>
    <path d="M112 92c-3 12-14 24-30 30" stroke-width="6" stroke-dasharray="18 1 9 2"/>
    <path d="M14 90c8 20 24 32 42 36" stroke-width="6"/>
  </g>
  <circle cx="59" cy="29" r="6" fill="#f00"/>
  <path d="M42 37L60 42 85 31 86 38 68 52 74 68 62 68 56 57 48 65 40 61 52 48z" fill="#f00"/>
  <text class="lg1" x="26" y="82" textLength="80" lengthAdjust="spacingAndGlyphs">UG爱好者</text>
  <path d="M18 88h92v14H18z" fill="#f00"/>
  <text class="lg2" x="19" y="99" textLength="90" lengthAdjust="spacingAndGlyphs">WWW.UGSNX.COM</text>
</svg>
</body>
</html>
```
FILE: styles.css
```css
* { box-sizing: border-box; }
html, body { margin: 0; padding: 0; }
body {
  width: 1219px; height: 805px; overflow: hidden; position: relative; background: #000;
  font: 12px/14px "Liberation Sans", "Noto Sans CJK SC", sans-serif; color: #111;
}
i, b { font-style: normal; font-weight: normal; }
.defs { position: absolute; width: 0; height: 0; }
.app { display: flex; flex-direction: column; height: 805px; }

.title { height: 22px; display: flex; align-items: flex-end; padding: 0 0 1px 4px; gap: 3px; color: #fff; font-size: 13px;
  background: linear-gradient(#8a8a8a 0, #555 7px, #161616 8px, #161616 100%); border-bottom: 1px solid #000; }
.title span { line-height: 16px; }
.title-ico { width: 16px; height: 18px; }
.menu { height: 26px; display: flex; align-items: center; gap: 10.6px; padding-left: 30px; position: relative;
  background: linear-gradient(#ececec, #dcdcdc); border-bottom: 1px solid #bbb; }
.menu u { text-decoration: underline; }
.menu-ico { position: absolute; left: 8px; top: 4px; width: 17px; height: 18px; }

.c { display: flex; align-items: center; justify-content: center; flex: none; height: 100%; }
.txt { font-size: 12px; color: #111; }
.low { align-items: flex-end; padding-bottom: 6px; }
.foot { align-items: flex-end; padding-bottom: 5px; }
.head { align-items: flex-start; padding-top: 32px; }
.w7{width:7px}.w10{width:10px}.w12{width:12px}.w14{width:14px}.w16{width:16px}.w18{width:18px}.w20{width:20px}.w22{width:22px}.w24{width:24px}.w28{width:28px}.w30{width:30px}.w32{width:32px}.w33{width:33px}.w34{width:34px}.w35{width:35px}.w36{width:36px}.w37{width:37px}.w48{width:48px}.w54{width:54px}.w64{width:64px}.w66{width:66px}.w78{width:78px}.w80{width:80px}.w82{width:82px}.w86{width:86px}.w90{width:90px}.w92{width:92px}.w98{width:98px}.w102{width:102px}.w110{width:110px}
.ml2 { margin-left: 2px; } .ml4 { margin-left: 4px; }
.drop { display: block; width: 0; height: 0; border: 3.5px solid transparent; border-top: 4px solid #000; border-bottom: 0; }
.sep { display: block; flex: none; width: 1px; height: 100%; background: #fbfbfb; box-shadow: -1px 0 0 #c4c4c4; }
.sep-pad { margin-left: 5px; }
.grip { display: block; flex: none; height: 100%; border-left: 2px dotted #777; background-clip: padding-box; }
.g5 { width: 4px; margin-left: 2px; } .g7 { width: 5px; margin-left: 2px; } .g8 { width: 8px; margin-left: 5px; margin-right: -5px; padding-right: 5px; } .g10 { width: 10px; margin-left: 0; }
.ic14 { width: 14px; height: 14px; flex: none; } .ic16 { width: 16px; height: 16px; flex: none; } .ic18 { width: 18px; height: 18px; flex: none; } .ic22 { width: 22px; height: 22px; flex: none; } .ic24 { width: 24px; height: 24px; flex: none; } .ic26 { width: 26px; height: 26px; flex: none; } .ic28 { width: 28px; height: 24px; flex: none; }

.bar { height: 35px; display: flex; background: linear-gradient(#e2e2e2, #d8d8d8); border-bottom: 1px solid #bdbdbd; padding: 2px 0; }
.bar-rest { flex: 1; margin: -2px 0; background: linear-gradient(#eaeaea, #e2e2e2); }

.ribbon { height: 67px; display: flex; background: linear-gradient(#e4e4e4, #d6d6d6); border-bottom: 1px solid #bbb; padding: 2px 0 1px; }
.tool { width: 80px; flex: none; display: flex; flex-direction: column; align-items: center; padding-top: 3px; gap: 6px; text-align: center; color: #000; line-height: 14px; }
.tool span { display: block; }
.tool.off { color: #a4a4a4; text-shadow: 1px 1px 0 #f0f0f0; }
.tool.w78 { width: 78px; } .tool.w80 { width: 80px; padding-left: 0; } .tool.w82 { width: 82px; }
.tool.w80 span { line-height: 14px; width: 78px; }

.row3 { height: 35px; display: flex; justify-content: flex-end; background: linear-gradient(#e0e0e0, #dadada); border-bottom: 2px solid #9a9a9a; }
.rbar { width: 333px; display: flex; border-left: 1px solid #fff; padding-bottom: 1px; background: linear-gradient(#dedede, #d4d4d4); }

.selbar { height: 31px; display: flex; align-items: center; padding: 2px 0 1px 5px; background: linear-gradient(#c8c8c8, #e2e2e2 40%, #e6e6e6); border-bottom: 1px solid #fff; }
.combo { height: 20px; display: flex; justify-content: space-between; border: 1px solid #a6a6a6; border-radius: 4px; background: #cfcfcf; color: #a4a4a4; text-shadow: 1px 1px 0 #efefef; }
.combo span { padding-left: 2px; line-height: 18px; }
.wa { width: 143px; margin-right: 9px; } .wb { width: 151px; margin-right: 0; }
.combo-btn { width: 16px; background: linear-gradient(#f6f6f6, #dcdcdc); border-left: 1px solid #bbb; display: flex; align-items: center; justify-content: center; border-radius: 0 3px 3px 0; }
.tri { display: block; width: 0; height: 0; border: 5px solid transparent; border-top: 6px solid #888; border-bottom: 0; }
.selbar .sep { height: 24px; }
.status { height: 21px; display: flex; align-items: center; padding: 1px 0 0 3px; position: relative; background: #e9e9e9; border-bottom: 1px solid #8c8c8c; }
.status strong { font-weight: bold; font-size: 13px; }
.status-sep { position: absolute; left: 681px; top: 0; bottom: 0; width: 1px; background: #bbb; box-shadow: 1px 0 0 #fff; }

.main { flex: 1; display: flex; min-height: 0; }
.tabs { width: 33px; flex: none; display: flex; flex-direction: column; align-items: flex-end; padding-top: 18px; background: linear-gradient(90deg, #a4a4a4, #acacac 70%, #888); }
.vt { width: 26px; height: 40px; margin-bottom: 2px; display: flex; align-items: center; justify-content: center; background: linear-gradient(90deg, #f0f0f0, #cfcfcf); border: 1px solid #777; border-right: 0; border-radius: 5px 0 0 5px; }
.vt.act { width: 29px; height: 44px; margin: -2px 0 1px; background: #f4f4f4; }
.gap12 { margin-top: 12px; } .gap14 { margin-top: 12px; }
.handle { width: 26px; height: 8px; margin-top: 2px; border: 1px solid #888; border-radius: 4px 0 0 4px; background: #d8d8d8; }
.sq { width: 21px; height: 18px; margin: 1px 0; display: flex; align-items: center; justify-content: center; background: #e0e0e0; border: 1px solid #999; }
.bar-tri { border-top-color: #333; }

.nav { width: 325px; flex: none; display: flex; flex-direction: column; background: #ececec; border-left: 1px solid #999; }
.nav-head { height: 32px; display: flex; align-items: center; gap: 12px; padding: 2px 0 0 12px; }
.nav-head strong { font-weight: bold; font-size: 13px; }
.table { width: 305px; height: 457px; margin-left: 8px; display: flex; flex-direction: column; border: 1px solid #777; background: #fff; }
.thead { height: 20px; display: flex; background: linear-gradient(#f0f0f0, #d0d0d0); flex: none; border-left: 1px solid #fff; }
.col1 { width: 200px; padding: 3px 0 0 6px; border-right: 1px solid #888; }
.col2 { padding: 3px 0 0 5px; }
.tbody { flex: 1; position: relative; background: repeating-linear-gradient(#fff 0 19px, #e2e2e2 19px 20px) 0 0; }
.tbody::after { content: ""; position: absolute; left: 200px; top: 0; bottom: 0; width: 1px; background: #000; }
.tr { height: 20px; display: flex; align-items: center; position: relative; color: #333; padding-left: 21px; }
.tr:first-child { padding-left: 4px; color: #1c2a50; }
.tr:nth-child(3) { padding-left: 23px; }
.tr:nth-child(4) { padding-left: 22px; }
.name { margin-left: 4px; } .n0 { margin-left: 0; } .n1 { margin-left: 4px; }
.sel { position: relative; z-index: 1; margin-left: 0; flex: 1; height: 18px; margin-right: 2px; padding-left: 3px; line-height: 18px; background: #3399ff; color: #fff; }
.holder { position: absolute; left: 157px; top: 1px; width: 10px; height: 16px; }
.bulb { width: 10px; height: 16px; margin-right: 4px; flex: none; }
.chk { width: 14px; height: 14px; margin-right: 2px; flex: none; }
.dots { position: absolute; left: 10px; width: 10px; border-bottom: 1px dotted #777; top: 10px; }
.d1 { border-left: 1px dotted #777; height: 1px; }
.d2::before, .d3::before { content: ""; position: absolute; left: 0; bottom: 0; height: 20px; border-left: 1px dotted #777; }
.d2, .d3 { height: 1px; }
.tfoot { height: 15px; flex: none; display: flex; align-items: center; padding-left: 4px; background: #e8e8e8; border-top: 1px solid #bbb; }
.left { border: 4px solid transparent; border-right: 5px solid #333; border-left: 0; }
.nav-foot { margin: 18px 0 0 16px; display: flex; flex-direction: column; gap: 12px; font-size: 14px; }
.nav-foot strong { font-weight: normal; white-space: nowrap; }
.view { flex: 1; background: #000; }

.bottom { height: 13px; display: flex; background: #e4e4e4; overflow: hidden; flex: none; border-top: 1px solid #eee; }
.bottom .c { align-items: flex-start; padding-top: 5px; }
.grip-b { margin-right: 0; }
.mla { margin-left: 45px; }

.scene { position: absolute; left: 0; top: 0; width: 1219px; height: 805px; pointer-events: none; }
.holes ellipse { fill: #6a5c12; }
.ax { font: 13px "Liberation Sans", sans-serif; }
.blue { fill: #1a34d0; } .cyan { fill: #18c8c8; } .green { fill: #2a8a2a; } .green2 { fill: #48a840; } .red { fill: #c82828; }

.mouse { position: absolute; left: 470px; top: 55px; width: 50px; height: 50px; display: flex; align-items: center; justify-content: center; border-radius: 6px; background: rgba(110,110,110,.9); }
.mouse-ic { width: 24px; height: 32px; margin-top: -4px; }

.dlg { position: absolute; left: 62px; top: 381px; width: 317px; height: 414px; display: flex; flex-direction: column; }
.dlg-title { height: 22px; flex: none; display: flex; align-items: center; padding-left: 3px; color: #fff; border-radius: 5px 5px 0 0; background: linear-gradient(#505050, #1c1c1c 50%, #111); }
.dlg-title .ic16 { margin-right: 6px; }
.dlg-title strong { flex: 1; padding-left: 5px; border-left: 1px solid #888; font-size: 15px; letter-spacing: 1.5px; line-height: 22px; }
.close { width: 20px; text-align: center; font-size: 14px; font-weight: bold; line-height: 22px; border-left: 1px solid #888; }
.dlg-body { flex: 1; background: #ececec; border: 1px solid #999; border-top: 1px solid #eee; padding: 10px 12px 0 9px; display: flex; flex-direction: column; }
.dlg-foot { height: 7px; flex: none; margin-left: 3px; background: #151515; border-radius: 0 0 4px 4px; }
.dtabs { display: flex; gap: 2px; padding-left: 2px; height: 19px; }
.dtabs.r2 { height: 21px; }
.dtab { height: 20px; flex: none; text-align: center; line-height: 19px; font-size: 13px; background: linear-gradient(#ececec, #c6c6c6); border: 1px solid #888; border-bottom: 0; border-radius: 5px 5px 0 0; }
.w71 { width: 71px; } .w72 { width: 72px; } .w100 { width: 100px; }
.dtab.active { width: 88px; height: 22px; margin-top: -1px; background: #ececec; position: relative; z-index: 1; }
.panel { height: 273px; flex: none; padding: 5px 4px 0 4px; border: 1px solid #888; background: #ececec; }
.shead { height: 22px; position: relative; padding-left: 6px; line-height: 24px; font-weight: bold; font-size: 13px; background: linear-gradient(#f8f8f8, #f0f0f0 50%, #d8d8d8); border-bottom: 1px solid #888; }
.chev { position: absolute; right: 0; top: 0; width: 26px; height: 100%; border-left: 1px solid #aaa; }
.chev::after { content: ""; position: absolute; left: 8px; width: 8px; height: 8px; border: solid #666; border-width: 3px 0 0 3px; transform: rotate(45deg); top: 9px; }
.chev.down::after { transform: rotate(225deg); top: 4px; }
.sbody { background: #cacaca; border-left: 1px solid #888; border-right: 1px solid #999; padding: 0 9px 0 7px; }
.s1 { height: 40px; display: flex; align-items: center; padding-bottom: 2px; }
.s1 .lab { flex: 1; }
.s2 { height: 107px; padding-top: 5px; }
.inp { display: block; height: 21px; font: 13px/18px "DejaVu Sans Mono", monospace; letter-spacing: 1.3px; text-align: right; padding: 0 2px 0 0; background: #fff; border: 1px solid #888; border-radius: 3px; box-shadow: inset 0 0 0 1px #eee; }
.i80 { width: 80px; }
.hl { background: linear-gradient(#3399ff, #3399ff) 3px 2px / 72px 15px no-repeat, #fff; color: #fff; }
.sel2 { width: 61px; height: 21px; margin-left: 4px; display: flex; align-items: center; padding-left: 3px; justify-content: space-between; background: #fff; border: 1px solid #888; border-radius: 3px; }
.sel2-btn { width: 17px; height: 19px; display: flex; align-items: center; justify-content: center; background: linear-gradient(#7ab6f0, #2f7fd8); }
.sel2-btn .tri { border-top-color: #111; }
.frow { display: flex; justify-content: space-between; align-items: center; height: 25px; }
.ck { display: flex; align-items: center; gap: 3px; height: 22px; }
.box { width: 15px; height: 16px; border: 1px solid #777; border-radius: 2px; background: linear-gradient(#f2f2f2, #c8c8c8); }
.expander { height: 14px; flex: none; margin: 6px -6px 3px -3px; display: flex; justify-content: center; align-items: center; gap: 7px; background: linear-gradient(#f4f4f4, #dcdcdc); border: 1px solid #bbb; }
.expander i { display: block; width: 7px; height: 7px; margin-top: 5px; border: solid #111; border-width: 2px 0 0 2px; transform: rotate(45deg); }
.btns { display: flex; justify-content: flex-end; gap: 7px; padding: 5px 5px 0 0; border-top: 1px solid #fff; }
.btn { width: 51px; height: 21px; text-align: center; line-height: 20px; border: 1px solid #777; border-radius: 4px; background: linear-gradient(#f6f6f6, #cfcfcf); }
.ok { background: linear-gradient(#d8f0c0, #8fd070); }

.redbox { position: absolute; left: 73px; top: 477px; width: 315px; height: 54px; border: 3px solid #f00; }
.callout { position: absolute; left: 460px; top: 589px; width: 278px; height: 76px; padding: 6px 0 0 5px; background: #fff; border: 3px solid #f00; font-size: 16px; font-weight: 500; line-height: 20px; letter-spacing: 5px; color: #000; box-shadow: 2px 2px 4px rgba(255,255,255,.2); }
.logo { position: absolute; left: 10px; top: 670px; width: 125px; height: 135px; }
.lg1 { font: bold 18px "Noto Sans CJK SC", "Liberation Sans", sans-serif; fill: #f00; stroke: #fff; stroke-width: .6px; paint-order: stroke; }
.lg2 { font: bold 11px "Liberation Sans", sans-serif; fill: #fff; }
```
